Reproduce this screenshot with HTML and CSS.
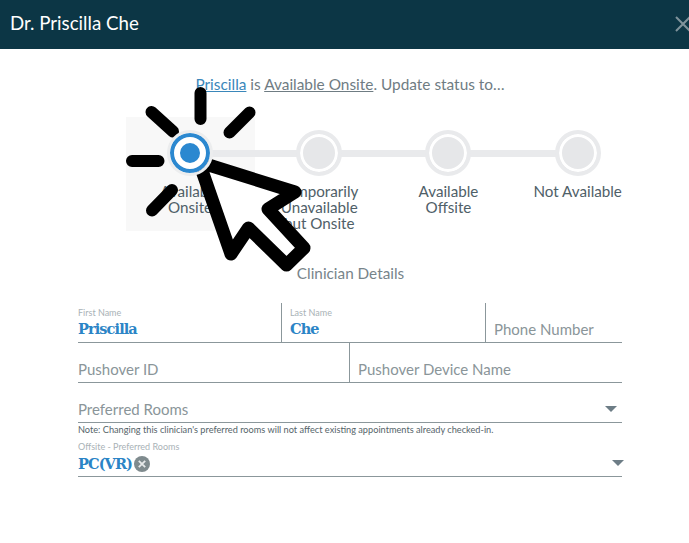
FILE: index.html
```html
<!DOCTYPE html>
<html lang="en">
<head>
<meta charset="utf-8">
<title>Dr. Priscilla Che</title>
<link rel="stylesheet" href="styles.css">
</head>
<body>
<div class="modal">
  <header class="modal-head">
    <h1 class="modal-title">Dr. Priscilla Che</h1>
    <svg class="close" viewBox="0 0 16 16" width="16" height="16"><path d="M1 1 15 15M15 1 1 15"/></svg>
  </header>
  <p class="status-line"><a class="link-blue">Priscilla</a> is <a class="link-gray">Available Onsite</a>. Update status to…</p>
  <div class="stepper">
    <div class="step active"><span class="dot"></span><span class="step-label">Available<br>Onsite</span></div>
    <div class="step"><span class="dot"></span><span class="step-label">Temporarily<br>Unavailable<br>but Onsite</span></div>
    <div class="step"><span class="dot"></span><span class="step-label">Available<br>Offsite</span></div>
    <div class="step last"><span class="dot"></span><span class="step-label">Not Available</span></div>
  </div>
  <h2 class="section-title">Clinician Details</h2>
  <form class="form">
    <div class="row row-three">
      <div class="field"><span class="mini">First Name</span><span class="value">Priscilla</span></div>
      <div class="field divided"><span class="mini">Last Name</span><span class="value">Che</span></div>
      <div class="field divided"><span class="ph">Phone Number</span></div>
    </div>
    <div class="row row-two">
      <div class="field"><span class="ph">Pushover ID</span></div>
      <div class="field divided"><span class="ph">Pushover Device Name</span></div>
    </div>
    <div class="row row-select">
      <span class="ph">Preferred Rooms</span>
      <span class="caret caret-a"></span>
    </div>
    <p class="note">Note: Changing this clinician's preferred rooms will not affect existing appointments already checked-in.</p>
    <div class="offsite">
      <span class="mini">Offsite - Preferred Rooms</span>
      <div class="offsite-value">
        <span class="value">PC(VR)</span>
        <svg class="clear" viewBox="0 0 16 16" width="16" height="16"><circle cx="8" cy="8" r="8"/><path d="M4.8 4.8 11.2 11.2M11.2 4.8 4.800 11.2"/></svg>
        <span class="caret caret-b"></span>
      </div>
    </div>
  </form>
</div>
<svg class="pointer" width="689" height="543" viewBox="0 0 689 543">
  <path class="rays" d="M200.500 93V119M151.500 112 173 131.500M249.500 112.500 229.500 132.500M132 161H158.500M172 190 152 210.500"/>
  <path class="arrow" d="M199 162 295 192 268 209 304 248 286.500 265 248.500 228 231 254Z"/>
</svg>
</body>
</html>
```
FILE: styles.css
```css
* { box-sizing: border-box; }
html, body { margin: 0; padding: 0; background: #fff; overflow: hidden; }
body { width: 689px; height: 543px; font-family: "Lato", "Noto Sans", sans-serif; color: #4f6068; position: relative; }

.modal-head {
  height: 49px;
  background: #0c3645;
  display: flex;
  align-items: center;
  padding-left: 10px;
  overflow: hidden;
  position: relative;
}
.modal-title { margin: -3px 0 0; font-size: 18.700px; font-weight: 400; color: #fff; line-height: 49px; }
.close { position: absolute; left: 675px; top: 16px; }
.close path { stroke: #7f939b; stroke-width: 2; fill: none; }

.status-line {
  margin: 26px 0 0;
  height: 18px;
  line-height: 18px;
  font-size: 15.400px;
  text-align: center;
  color: #6f7c83;
  padding-left: 11px;
}
.link-blue { color: #3a87ba; text-decoration: underline; }
.link-gray { color: #6f7c83; text-decoration: underline; }

.stepper { display: flex; margin: 24px 0 0 125.500px; }
.step {
  width: 129.200px;
  height: 114px;
  padding-top: 13px;
  display: flex;
  flex-direction: column;
  align-items: center;
  position: relative;
}
.step::after {
  content: "";
  position: absolute;
  left: 64px;
  width: 130px;
  top: 33px;
  height: 7px;
  background: #e9eaec;
}
.step.last::after { display: none; }
.step.active { background: #f8f8f8; }
.dot {
  width: 46px;
  height: 46px;
  border: 4px solid #e9eaec;
  border-radius: 50%;
  background: #e6e7e9;
  box-shadow: inset 0 0 0 3px #fff;
  position: relative;
  z-index: 1;
}
.active .dot {
  background: #2b88d0;
  border: 3px solid #ecedee;
  background-clip: padding-box;
  box-shadow: inset 0 0 0 4px #2b88d0, inset 0 0 0 10px #fff;
}
.step-label {
  margin-top: 7px;
  font-size: 15.200px;
  line-height: 16px;
  text-align: center;
  color: #4f6068;
  white-space: nowrap;
}

.section-title {
  margin: 33px 0 0;
  height: 18px;
  line-height: 18px;
  font-size: 15.300px;
  font-weight: 400;
  color: #77848a;
  text-align: center;
  padding-left: 12px;
}

.form { margin: 21px 67px 0 78px; }
.row { border-bottom: 1px solid #8b979b; height: 40px; }
.row-three { display: grid; grid-template-columns: 203px 204px 1fr; }
.row-two { display: grid; grid-template-columns: 271px 1fr; }
.field { height: 39px; display: flex; flex-direction: column; }
.divided { border-left: 1px solid #8b979b; padding-left: 8px; }
.mini { font-size: 9px; line-height: 11px; color: #a9b2b6; padding-top: 4px; display: block; white-space: nowrap; }
.value { font-family: "DejaVu Serif", serif; font-weight: 700; font-size: 14.500px; line-height: 17px; color: #2b84c6; display: block; margin-top: 2px; letter-spacing: -0.900px; }
.ph { font-size: 15px; line-height: 18px; color: #8a9599; padding-top: 17px; display: block; }

.row-select { position: relative; }
.caret { position: absolute; width: 0; height: 0; border-left: 6px solid transparent; border-right: 6px solid transparent; border-top: 6px solid #6d7d86; }
.caret-a { right: 5px; top: 23px; }
.caret-b { right: -2px; top: 6px; }

.note { margin: 0; font-size: 9.200px; line-height: 14px; color: #556469; white-space: nowrap; height: 17px; }

.offsite { height: 37px; border-bottom: 1px solid #8b979b; }
.offsite .mini { padding-top: 1px; }
.offsite-value { display: flex; align-items: center; gap: 2px; position: relative; height: 18px; margin-top: 2px; }
.offsite-value .value { margin-top: 0; }
.clear { margin-top: 1px; }
.clear circle { fill: #7f8b8e; }
.clear path { stroke: #e6e9ea; stroke-width: 1.800; fill: none; }

.pointer { position: absolute; left: 0; top: 0; pointer-events: none; }
.rays { stroke: #000; stroke-width: 12; stroke-linecap: round; fill: none; }
.arrow { stroke: #000; stroke-width: 13; stroke-linejoin: round; fill: #fff; }
```
